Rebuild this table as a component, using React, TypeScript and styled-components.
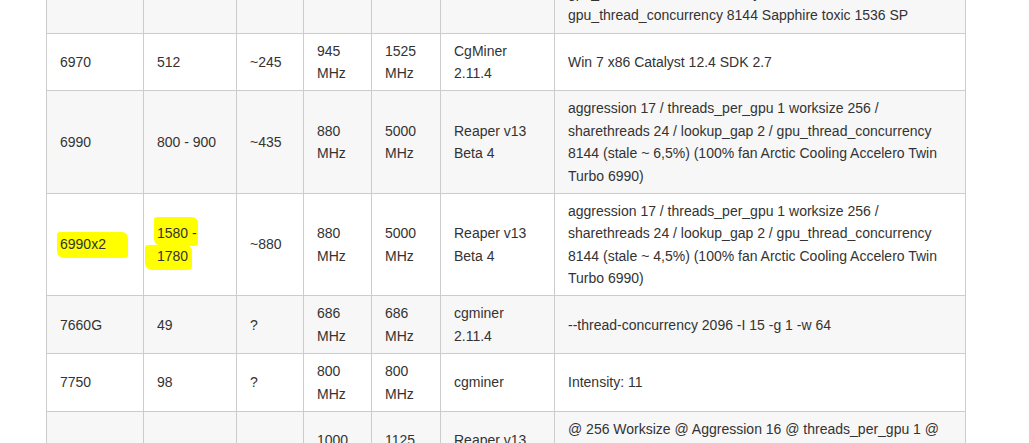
import React from 'react';
import styled, { createGlobalStyle } from 'styled-components';

const GlobalStyle = createGlobalStyle`
  html, body {
    margin: 0;
    padding: 0;
    background: #fff;
    overflow: hidden;
  }
  body {
    font-family: "Liberation Sans", Arial, sans-serif;
    font-size: 14px;
    color: #333;
  }
`;

const Page = styled.div`
  padding-left: 46px;
  margin-top: -70px;
`;

const Table = styled.table`
  width: 920px;
  table-layout: fixed;
  border-collapse: collapse;
  border: 1px solid #ccc;
  line-height: 1.6;
`;

const Col = styled.col<{ $w: number }>`
  width: ${(p) => p.$w}px;
`;

const Row = styled.tr`
  &:nth-child(odd) {
    background: #f7f7f7;
  }
`;

const Cell = styled.td`
  border: 1px solid #ccc;
  padding: 6px 13px;
  vertical-align: middle;
`;

const Mark = styled.span<{ $pad: [number, number, number, number] }>`
  background: #ffff00;
  padding: ${(p) => p.$pad.map((v) => `${v}px`).join(' ')};
  margin: 0 ${(p) => -p.$pad[1]}px 0 ${(p) => -p.$pad[3]}px;
  border-radius: 3px 6px 4px 7px;
  -webkit-box-decoration-break: clone;
  box-decoration-break: clone;
`;

type Gpu = {
  model: React.ReactNode;
  mhash: React.ReactNode;
  watts: string;
  core: string;
  mem: string;
  miner: string;
  notes: string;
};

const rows: Gpu[] = [
  {
    model: '7970',
    mhash: '700',
    watts: '~?',
    core: '1100 MHz',
    mem: '1575 MHz',
    miner: 'Reaper v13 Beta 4',
    notes:
      'aggression 20 / threads_per_gpu 1 / worksize 256 / sharethreads 24 / lookup_gap 2 / gpu_engine 1100 / gpu_memclock 1575 / intensity 19 / vectors 1 / gpu_thread_concurrency 8144 Sapphire toxic 1536 SP',
  },
  {
    model: '6970',
    mhash: '512',
    watts: '~245',
    core: '945 MHz',
    mem: '1525 MHz',
    miner: 'CgMiner 2.11.4',
    notes: 'Win 7 x86 Catalyst 12.4 SDK 2.7',
  },
  {
    model: '6990',
    mhash: '800 - 900',
    watts: '~435',
    core: '880 MHz',
    mem: '5000 MHz',
    miner: 'Reaper v13 Beta 4',
    notes:
      'aggression 17 / threads_per_gpu 1 worksize 256 / sharethreads 24 / lookup_gap 2 / gpu_thread_concurrency 8144 (stale ~ 6,5%) (100% fan Arctic Cooling Accelero Twin Turbo 6990)',
  },
  {
    model: <Mark $pad={[4, 22, 6, 3]}>6990x2</Mark>,
    mhash: (
      <>
        <Mark $pad={[8, 1, 5, 3]}>1580 -</Mark> <Mark $pad={[3, 4, 6, 12]}>1780</Mark>
      </>
    ),
    watts: '~880',
    core: '880 MHz',
    mem: '5000 MHz',
    miner: 'Reaper v13 Beta 4',
    notes:
      'aggression 17 / threads_per_gpu 1 worksize 256 / sharethreads 24 / lookup_gap 2 / gpu_thread_concurrency 8144 (stale ~ 4,5%) (100% fan Arctic Cooling Accelero Twin Turbo 6990)',
  },
  {
    model: '7660G',
    mhash: '49',
    watts: '?',
    core: '686 MHz',
    mem: '686 MHz',
    miner: 'cgminer 2.11.4',
    notes: '--thread-concurrency 2096 -I 15 -g 1 -w 64',
  },
  {
    model: '7750',
    mhash: '98',
    watts: '?',
    core: '800 MHz',
    mem: '800 MHz',
    miner: 'cgminer',
    notes: 'Intensity: 11',
  },
  {
    model: '7950',
    mhash: '600',
    watts: '~200',
    core: '1000 MHz',
    mem: '1125 MHz',
    miner: 'Reaper v13 Beta 4',
    notes:
      '@ 256 Worksize @ Aggression 16 @ threads_per_gpu 1 @ sharethreads 20 @ lookup_gap 2 @ gpu_thread_concurrency 8192 @ 100% fan',
  },
];

const widths = [97, 93, 67, 68, 69, 114, 411];

export default function App() {
  return (
    <Page>
      <GlobalStyle />
      <Table>
        <colgroup>
          {widths.map((w, i) => (
            <Col key={i} $w={w} />
          ))}
        </colgroup>
        <tbody>
          {rows.map((r, i) => (
            <Row key={i}>
              <Cell>{r.model}</Cell>
              <Cell>{r.mhash}</Cell>
              <Cell>{r.watts}</Cell>
              <Cell>{r.core}</Cell>
              <Cell>{r.mem}</Cell>
              <Cell>{r.miner}</Cell>
              <Cell>{r.notes}</Cell>
            </Row>
          ))}
        </tbody>
      </Table>
    </Page>
  );
}
